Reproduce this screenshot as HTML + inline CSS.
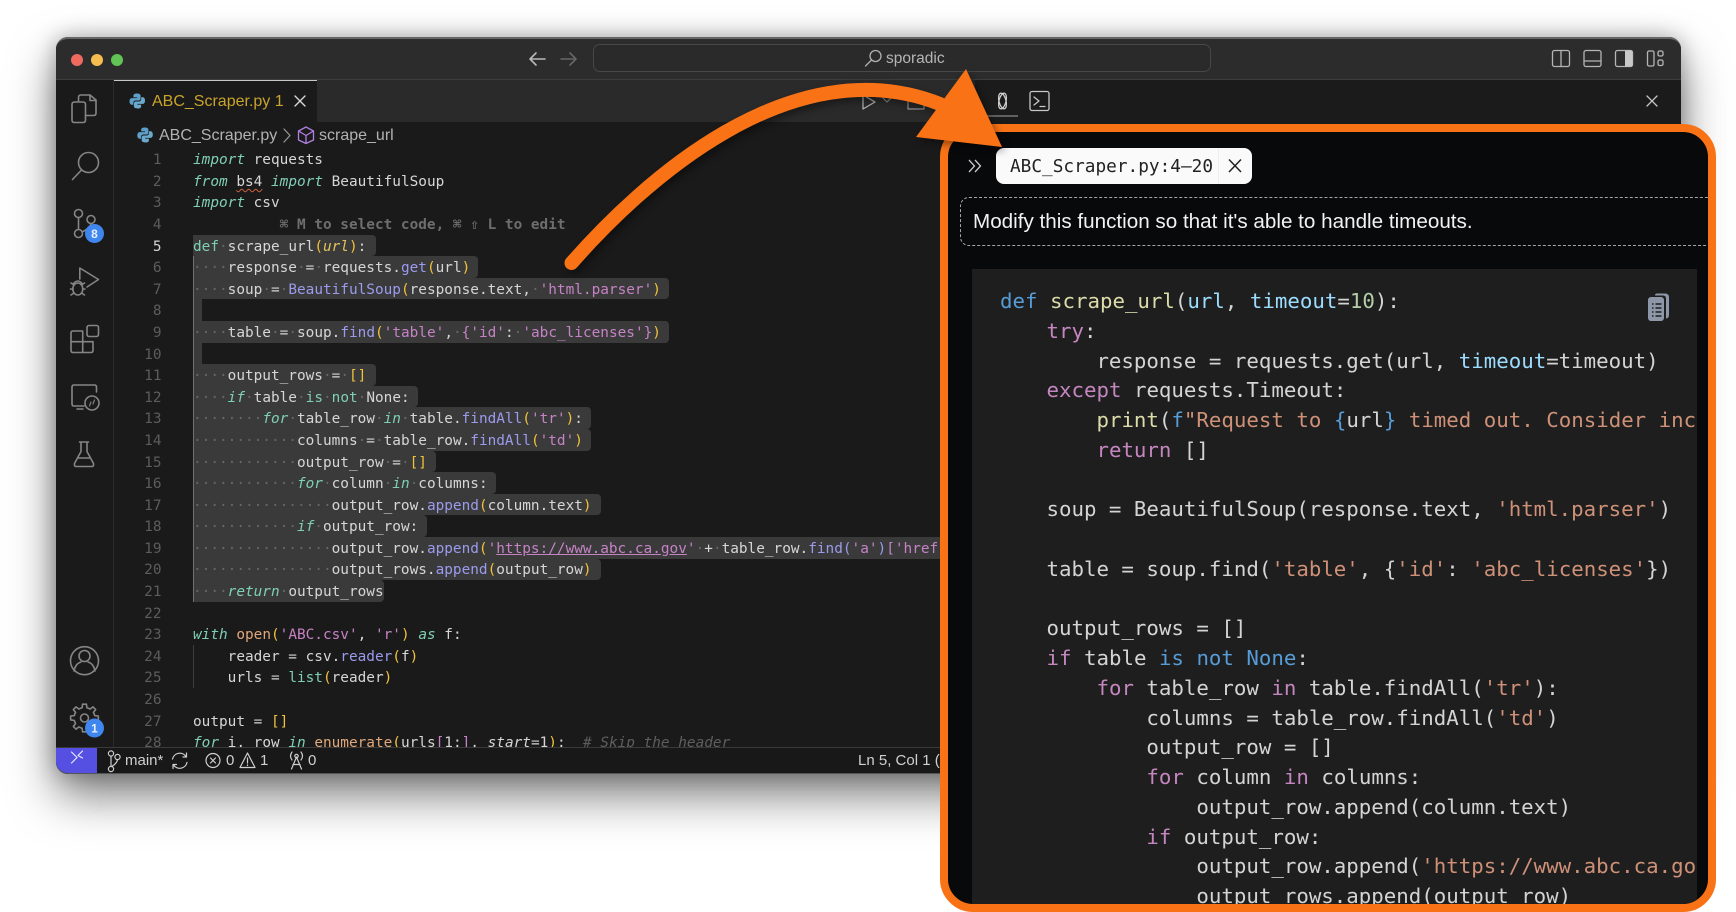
<!DOCTYPE html>
<html><head><meta charset="utf-8"><title>ABC_Scraper</title>
<style>
html,body{margin:0;padding:0;background:#fff;width:1736px;height:912px;overflow:hidden}
*{box-sizing:border-box}
.abs{position:absolute}
.sans{font-family:"Liberation Sans",sans-serif}
#win{position:absolute;left:56px;top:37px;width:1625px;height:737px;border-radius:12px;background:#1a1a1a;box-shadow:0 22px 46px rgba(0,0,0,.5),0 0 22px rgba(0,0,0,.28)}
#title{position:absolute;left:56px;top:37px;width:1625px;height:43px;background:#2c2c2c;border-top:2px solid #666;border-bottom:1px solid #3c3c3c;border-radius:12px 12px 0 0}
#tabrow{position:absolute;left:113px;top:80px;width:862px;height:42px;background:#2a2a2a}
#tab{position:absolute;left:113px;top:80px;width:204px;height:42px;background:#1a1a1a;border-top:1.5px solid #c8c8c8}
#actline{position:absolute;left:113px;top:80px;width:1px;height:667px;background:#2b2b2b}
#status{position:absolute;left:56px;top:747px;width:1625px;height:27px;background:#181818;border-top:1px solid #3a3a3a;border-bottom:1px solid #555;border-radius:0 0 12px 12px;overflow:hidden}
#remote{position:absolute;left:0;top:0;width:41px;height:27px;background:#5650e2}
.sel{position:absolute;left:193px;height:21.6px;background:#3a3a3a;border-radius:0 4px 4px 0}
#nums{position:absolute;left:121px;top:150.2px;width:40.5px;height:596.8px;overflow:hidden;font:14.4px/21.6px "DejaVu Sans Mono",monospace;color:#5c5c5c;text-align:right}
#nums b{font-weight:normal;color:#d4d4d4}
#code{position:absolute;left:193px;top:150.2px;width:747px;height:596.8px;overflow:hidden;font:14.4px/21.6px "DejaVu Sans Mono",monospace;color:#d6d6d6;filter:blur(.25px)}
#code div{height:21.6px;white-space:pre}
.k{color:#7fcfb6;font-style:italic}.K{color:#7fcfb6}.f{color:#9b9bee}.s{color:#c583c6}.p{color:#f0c23c}.d{color:#666}.v{color:#e2c35c;font-style:italic}.o{color:#e0a87a}.c{color:#5e5e5e;font-style:italic}.h{color:#6e6e6e;font-weight:bold}.w{color:#8a8a8a;font-style:italic}
.u{text-decoration:underline;text-decoration-color:#c583c6}
.wv{text-decoration:underline wavy #c8623c 1px;text-underline-offset:2px}
#panel{position:absolute;left:940px;top:124px;width:776px;height:788px;border:8px solid #f97316;border-radius:33px;background:#08090b;overflow:hidden}
#pill{position:absolute;left:47.5px;top:16px;width:256.5px;height:36px;background:#fafafa;border-radius:8px;color:#222;font:17.75px/39.5px "DejaVu Sans Mono",monospace}
#pill span{position:absolute;left:14.5px;top:0;white-space:pre}
#pill i{position:absolute;left:222.5px;top:0;width:1px;height:36px;background:#eee}
#prompt{position:absolute;left:12px;top:64.5px;width:770px;height:49px;border:1px dashed #a5a5a5;border-radius:9px}
#ptext{position:absolute;left:25px;top:77.5px;font:20.65px/24px "Liberation Sans",sans-serif;color:#f2f2f2;white-space:pre}
#box{position:absolute;left:24px;top:137px;width:725px;height:640px;background:#1e1e1e;overflow:hidden}
#rc{position:absolute;left:24.5px;top:18px;width:900px;font:20.76px/29.75px "DejaVu Sans Mono",monospace;color:#d4d4d4;filter:blur(.25px)}
#rc div{height:29.75px;white-space:pre}
.b{color:#569cd6}.y{color:#dcdcaa}.l{color:#9cdcfe}.n{color:#b5cea8}.m{color:#c586c0}.r{color:#ce9178}
svg{position:absolute;left:0;top:0;overflow:visible}
</style></head><body>
<div id="win"></div>
<div id="title"></div>
<div id="tabrow"></div>
<div id="tab"></div>
<div id="actline"></div>

<div class="abs" style="left:593px;top:44px;width:618px;height:28px;border:1px solid #474747;border-radius:7px;background:#2a2a2a"></div>
<div class="abs sans" style="left:886px;top:50px;font-size:15.5px;line-height:18px;color:#b5b5b5">sporadic</div>

<div class="abs sans" style="left:152px;top:92px;font-size:16px;line-height:19px;color:#c9a42b;white-space:pre">ABC_Scraper.py 1</div>
<div class="abs sans" style="left:159px;top:126px;font-size:16px;line-height:19px;color:#b2b2b2">ABC_Scraper.py</div>
<div class="abs sans" style="left:319px;top:126px;font-size:16px;line-height:19px;color:#b2b2b2">scrape_url</div>

<div class="sel" style="top:234.6px;width:183px"></div>
<div class="sel" style="top:256.2px;width:285px"></div>
<div class="sel" style="top:277.8px;width:476px"></div>
<div class="sel" style="top:299.4px;width:9px;border-radius:0"></div>
<div class="sel" style="top:321px;width:476px"></div>
<div class="sel" style="top:342.6px;width:9px;border-radius:0"></div>
<div class="sel" style="top:364.2px;width:183px"></div>
<div class="sel" style="top:385.8px;width:225px"></div>
<div class="sel" style="top:407.4px;width:398px"></div>
<div class="sel" style="top:429px;width:398px"></div>
<div class="sel" style="top:450.6px;width:243px"></div>
<div class="sel" style="top:472.2px;width:303px"></div>
<div class="sel" style="top:493.8px;width:408px"></div>
<div class="sel" style="top:515.4px;width:234px"></div>
<div class="sel" style="top:537px;width:750px"></div>
<div class="sel" style="top:558.6px;width:408px"></div>
<div class="sel" style="top:580.2px;width:191px"></div>
<div class="abs" style="left:193px;top:256px;width:1px;height:346px;background:#707070"></div>
<div class="abs" style="left:193px;top:645px;width:1px;height:43px;background:#3d3d3d"></div>

<div id="nums"><div>1</div><div>2</div><div>3</div><div>4</div><div><b>5</b></div><div>6</div><div>7</div><div>8</div><div>9</div><div>10</div><div>11</div><div>12</div><div>13</div><div>14</div><div>15</div><div>16</div><div>17</div><div>18</div><div>19</div><div>20</div><div>21</div><div>22</div><div>23</div><div>24</div><div>25</div><div>26</div><div>27</div><div>28</div></div>

<div id="code">
<div><span class="k">import</span> requests</div>
<div><span class="k">from</span> <span class="wv">bs4</span> <span class="k">import</span> BeautifulSoup</div>
<div><span class="k">import</span> csv</div>
<div class="h">          ⌘ M to select code, ⌘ ⇧ L to edit</div>
<div><span class="K">def</span><span class="d">·</span>scrape_url<span class="p">(</span><span class="v">url</span><span class="p">)</span>:</div>
<div><span class="d">····</span>response<span class="d">·</span>=<span class="d">·</span>requests.<span class="f">get</span><span class="p">(</span>url<span class="p">)</span></div>
<div><span class="d">····</span>soup<span class="d">·</span>=<span class="d">·</span><span class="f">BeautifulSoup</span><span class="p">(</span>response.text,<span class="d">·</span><span class="s">'html.parser'</span><span class="p">)</span></div>
<div></div>
<div><span class="d">····</span>table<span class="d">·</span>=<span class="d">·</span>soup.<span class="f">find</span><span class="p">(</span><span class="s">'table'</span>,<span class="d">·</span><span class="s">{'id'</span>:<span class="d">·</span><span class="s">'abc_licenses'}</span><span class="p">)</span></div>
<div></div>
<div><span class="d">····</span>output_rows<span class="d">·</span>=<span class="d">·</span><span class="p">[]</span></div>
<div><span class="d">····</span><span class="k">if</span><span class="d">·</span>table<span class="d">·</span><span class="K">is</span><span class="d">·</span><span class="K">not</span><span class="d">·</span>None:</div>
<div><span class="d">········</span><span class="k">for</span><span class="d">·</span>table_row<span class="d">·</span><span class="k">in</span><span class="d">·</span>table.<span class="f">findAll</span><span class="p">(</span><span class="s">'tr'</span><span class="p">)</span>:</div>
<div><span class="d">············</span>columns<span class="d">·</span>=<span class="d">·</span>table_row.<span class="f">findAll</span><span class="p">(</span><span class="s">'td'</span><span class="p">)</span></div>
<div><span class="d">············</span>output_row<span class="d">·</span>=<span class="d">·</span><span class="p">[]</span></div>
<div><span class="d">············</span><span class="k">for</span><span class="d">·</span>column<span class="d">·</span><span class="k">in</span><span class="d">·</span>columns:</div>
<div><span class="d">················</span>output_row.<span class="f">append</span><span class="p">(</span>column.text<span class="p">)</span></div>
<div><span class="d">············</span><span class="k">if</span><span class="d">·</span>output_row:</div>
<div><span class="d">················</span>output_row.<span class="f">append</span><span class="p">(</span><span class="s">'</span><span class="s u">https://www.abc.ca.gov</span><span class="s">'</span><span class="d">·</span>+<span class="d">·</span>table_row.<span class="f">find</span><span class="f">(</span><span class="s">'a'</span><span class="f">)</span><span class="s">['href</span></div>
<div><span class="d">················</span>output_rows.<span class="f">append</span><span class="p">(</span>output_row<span class="p">)</span></div>
<div><span class="d">····</span><span class="k">return</span><span class="d">·</span>output_rows</div>
<div></div>
<div><span class="k">with</span> <span class="o">open</span><span class="p">(</span><span class="s">'ABC.csv'</span>, <span class="s">'r'</span><span class="p">)</span> <span class="k">as</span> f:</div>
<div>    reader = csv.<span class="f">reader</span><span class="p">(</span>f<span class="p">)</span></div>
<div>    urls = <span class="K">list</span><span class="p">(</span>reader<span class="p">)</span></div>
<div></div>
<div>output = <span class="p">[]</span></div>
<div><span class="k">for</span> i, row <span class="k">in</span> <span class="o">enumerate</span><span class="p">(</span>urls<span class="s">[</span>1:<span class="s">]</span>, <span class="w" style="color:#d6d6d6">start</span>=1<span class="p">)</span>:  <span class="c"># Skip the header</span></div>
</div>

<div id="status"><div id="remote"></div></div>
<div class="abs sans" style="left:125px;top:751px;font-size:15px;line-height:19px;color:#d0d0d0">main*</div>
<div class="abs sans" style="left:226px;top:751px;font-size:15px;line-height:19px;color:#d0d0d0">0</div>
<div class="abs sans" style="left:260px;top:751px;font-size:15px;line-height:19px;color:#d0d0d0">1</div>
<div class="abs sans" style="left:308px;top:751px;font-size:15px;line-height:19px;color:#d0d0d0">0</div>
<div class="abs sans" style="left:858px;top:751px;font-size:15px;line-height:19px;color:#d0d0d0;white-space:pre">Ln 5, Col 1 (</div>

<svg width="1736" height="912" viewBox="0 0 1736 912" fill="none" stroke="#858585" stroke-width="1.6" stroke-linecap="round" stroke-linejoin="round">
<circle cx="77" cy="60" r="6" fill="#ee6a5f" stroke="none"/>
<circle cx="97" cy="60" r="6" fill="#f5bd4f" stroke="none"/>
<circle cx="117" cy="60" r="6" fill="#61c454" stroke="none"/>
<path d="M545 59H530M536 53L530 59L536 65" stroke="#b8b8b8"/>
<path d="M561 59H576M570 53L576 59L570 65" stroke="#666"/>
<circle cx="875.5" cy="56" r="5.5" stroke="#b0b0b0" stroke-width="1.3"/><path d="M871.5 60L865.5 66" stroke="#b0b0b0" stroke-width="1.3"/>
<g stroke="#b5b5b5" stroke-width="1.3">
<rect x="1552.5" y="50.5" width="17" height="16" rx="2"/><path d="M1561 50.5V66.5"/>
<rect x="1584" y="50.5" width="17" height="16" rx="2"/><path d="M1584 61H1601"/>
<rect x="1615.5" y="50.5" width="17" height="16" rx="2"/><rect x="1625" y="50.5" width="7.5" height="16" fill="#c8c8c8" stroke="none"/>
<rect x="1647.5" y="51" width="6.5" height="15" rx="1.5"/><rect x="1658" y="51" width="5" height="5" rx="1.5"/><rect x="1658" y="60" width="5" height="5.5" rx="1.5"/>
</g>
<path d="M295 96L305 106M305 96L295 106" stroke="#d8d8d8" stroke-width="1.4"/>
<g stroke="none">
<path d="M137 93.500c-3 0-3.600 1.200-3.600 2.300v1.600h3.800v.7h-5.300c-1.500 0-2.400 1.300-2.400 3.300s.9 3.300 2.300 3.300h1.500v-1.900c0-1.300 1-2.300 2.300-2.300h3.100c1 0 1.900-.9 1.900-1.900v-3c0-1.200-1.400-2.100-3.600-2.100z" fill="#5e9fc9"/>
<path d="M137.500 108.500c3 0 3.600-1.200 3.600-2.300v-1.600h-3.800v-.7h5.300c1.500 0 2.400-1.300 2.400-3.300s-.9-3.300-2.300-3.300h-1.500v1.900c0 1.300-1 2.300-2.300 2.300h-3.100c-1 0-1.900.9-1.900 1.900v3c0 1.200 1.400 2.100 3.600 2.100z" fill="#6aa9cc"/>
</g>
<g stroke="none" transform="translate(7.800 34)">
<path d="M137 93.500c-3 0-3.600 1.200-3.600 2.300v1.600h3.800v.7h-5.300c-1.500 0-2.400 1.300-2.400 3.300s.9 3.300 2.300 3.300h1.500v-1.900c0-1.300 1-2.300 2.300-2.300h3.100c1 0 1.900-.9 1.900-1.900v-3c0-1.200-1.400-2.100-3.600-2.100z" fill="#5e9fc9"/>
<path d="M137.500 108.500c3 0 3.600-1.200 3.600-2.300v-1.600h-3.800v-.7h5.300c1.500 0 2.400-1.300 2.400-3.300s-.9-3.300-2.300-3.300h-1.500v1.900c0 1.300-1 2.300-2.300 2.300h-3.100c-1 0-1.900.9-1.900 1.900v3c0 1.200 1.400 2.100 3.600 2.100z" fill="#6aa9cc"/>
</g>
<path d="M284 129L290 135.500L284 142" stroke="#9a9a9a" stroke-width="1.2"/>
<path d="M306 127L313.500 131V140L306 143.500L298.500 140V131ZM298.500 131L306 135.500L313.500 131M306 135.500V143.500" stroke="#b07fe0" stroke-width="1.3"/>
<path d="M863 95L875 102L863 109Z" stroke="#b0b0b0" stroke-width="1.3"/>
<path d="M883 98L887 102L891 98" stroke="#888" stroke-width="1.2"/>
<rect x="908" y="95" width="16" height="14" stroke="#999" stroke-width="1.2"/>
<rect x="975" y="80" width="706" height="42" fill="#1b1b1b" stroke="none"/>
<ellipse cx="1002.500" cy="101" rx="3.500" ry="8" stroke="#cfcfcf" stroke-width="1.3" transform="rotate(14 1002.500 101)"/>
<ellipse cx="1002.500" cy="101" rx="3.500" ry="8" stroke="#cfcfcf" stroke-width="1.3" transform="rotate(-14 1002.500 101)"/>
<path d="M985 116H1018" stroke="#777" stroke-width="1.600" stroke-linecap="butt"/>
<rect x="1030" y="91.500" width="19" height="19" rx="2" stroke="#c8c8c8" stroke-width="1.300"/>
<path d="M1034 97L1039 101L1034 105M1040 106.500H1045" stroke="#c8c8c8" stroke-width="1.300"/>
<path d="M1647 96L1657 106M1657 96L1647 106" stroke="#c8c8c8" stroke-width="1.300"/>
<path d="M78.500 101V97.500Q78.500 95 81 95H90L96 100V113Q96 115.500 93.500 115.500H85.500"/>
<path d="M90 95V100.500H96"/>
<path d="M74.500 102H83Q85.500 102 85.500 104.500V120Q85.500 122.500 83 122.500H74.500Q72 122.500 72 120V104.500Q72 102 74.500 102Z"/>
<circle cx="88.500" cy="162.500" r="10"/><path d="M81.500 170L72.500 179.500"/>
<circle cx="78.500" cy="213.500" r="4"/><circle cx="78.500" cy="233.500" r="4"/><circle cx="91" cy="219.500" r="4"/>
<path d="M78.500 217.500V229.500M91 223.500Q90.500 228 82 232"/>
<path d="M79.800 279V268L98.500 279.500L87 287"/>
<ellipse cx="77.800" cy="289" rx="5" ry="6"/><path d="M71 283L74 285M84.500 283L81.500 285M70.500 289H73M85 289H82.500M71 295L74 293M84.500 295L81.500 293M73 284Q78 278 82.500 284"/>
<rect x="87" y="325.500" width="11.500" height="11" rx="2"/>
<path d="M73 331H82.700V341.700H93V350.500Q93 352.500 91 352.500H73Q71 352.500 71 350.500V333Q71 331 73 331ZM71 341.700H82.700V352.500"/>
<path d="M96.500 392V387Q96.500 385 94.500 385H74Q72 385 72 387V404Q72 406 74 406H84M77 409H83"/>
<circle cx="92" cy="403" r="7"/><path d="M89.500 406L91 402M93 404L94.500 400" stroke-width="1.100"/>
<path d="M79.500 442H88.500M81 442V451.500L74.500 463.500Q73.800 466.500 76.500 466.500H91.500Q94.200 466.500 93.500 463.500L87 451.500V442M77.500 458H90.500"/>
<circle cx="84.500" cy="660.700" r="14"/><circle cx="84.500" cy="656" r="5.500"/><path d="M74 671Q75.500 663.500 81 662M95 671Q93.500 663.500 88 662"/>
<g transform="translate(84.500 718)">
<circle r="4"/>
<path d="M-4.020 -9.700L-2.360 -10.230L-1.950 -13.860H1.950L2.360 -10.230L4.020 -9.700"/>
<path transform="rotate(45)" d="M-4.020 -9.700L-2.360 -10.230L-1.950 -13.860H1.950L2.360 -10.230L4.020 -9.700"/>
<path transform="rotate(90)" d="M-4.020 -9.700L-2.360 -10.230L-1.950 -13.860H1.950L2.360 -10.230L4.020 -9.700"/>
<path transform="rotate(135)" d="M-4.020 -9.700L-2.360 -10.230L-1.950 -13.860H1.950L2.360 -10.230L4.020 -9.700"/>
<path transform="rotate(180)" d="M-4.020 -9.700L-2.360 -10.230L-1.950 -13.860H1.950L2.360 -10.230L4.020 -9.700"/>
<path transform="rotate(225)" d="M-4.020 -9.700L-2.360 -10.230L-1.950 -13.860H1.950L2.360 -10.230L4.020 -9.700"/>
<path transform="rotate(270)" d="M-4.020 -9.700L-2.360 -10.230L-1.950 -13.860H1.950L2.360 -10.230L4.020 -9.700"/>
<path transform="rotate(315)" d="M-4.020 -9.700L-2.360 -10.230L-1.950 -13.860H1.950L2.360 -10.230L4.020 -9.700"/>
</g>
<circle cx="94.500" cy="233.500" r="9.500" fill="#3f86ee" stroke="none"/>
<circle cx="94.500" cy="728" r="9.500" fill="#3f86ee" stroke="none"/>
<text x="94.500" y="238" text-anchor="middle" font-family="Liberation Sans,sans-serif" font-size="12" font-weight="bold" fill="#e8f0ff" stroke="none">8</text>
<text x="94.500" y="732.500" text-anchor="middle" font-family="Liberation Sans,sans-serif" font-size="12" font-weight="bold" fill="#e8f0ff" stroke="none">1</text>
<path d="M72 764L77.500 758.500L72 753M83 752L78.500 756.500L83 759" stroke="#e8e8ff" stroke-width="1.200" transform="translate(-.500 -1)"/>
<g stroke="#cfcfcf" stroke-width="1.200">
<circle cx="111" cy="753.500" r="2.600"/><circle cx="111" cy="769" r="2.600"/><circle cx="117.500" cy="757" r="2.600"/><path d="M111 756V766.500M117.500 759.600Q117 763 112.500 766"/>
<path d="M172.500 759A7.500 7.500 0 0 1 186 756.500M187 762.500A7.500 7.500 0 0 1 173.500 765M186.500 753V757H183M173 768.500V764.500H176.500"/>
<circle cx="213" cy="760.500" r="7"/><path d="M210.500 758L215.500 763M215.500 758L210.500 763"/>
<path d="M247.500 753L255 767.500H240ZM247.500 758V763M247.500 765V765.500"/>
<path d="M296.500 757L291.500 769M296.500 757L301.500 769M293 764.500H300"/><circle cx="296.500" cy="756" r="1.700"/>
<path d="M292 752Q289 756 292 760M301 752Q304 756 301 760"/>
</g>
</svg>

<div id="panel">
  <svg width="30" height="30" style="left:20px;top:23px" viewBox="0 0 30 30" fill="none" stroke="#c8c8c8" stroke-width="1.300"><path d="M1 5L6.500 11L1 17M7 5L12.500 11L7 17"/></svg>
  <div id="pill"><span>ABC_Scraper.py:4–20</span><i></i><svg width="20" height="20" style="left:231px;top:9px" viewBox="0 0 20 20" fill="none" stroke="#222" stroke-width="1.500"><path d="M2 2.500L14 15M14 2.500L2 15"/></svg></div>
  <div id="prompt"></div>
  <div id="ptext">Modify this function so that it's able to handle timeouts.</div>
  <div id="box">
    <div id="rc">
<div style="padding-left:3.5px"><span class="b">def</span> <span class="y">scrape_url</span>(<span class="l">url</span>, <span class="l">timeout</span>=<span class="n">10</span>):</div>
<div>    <span class="m">try</span>:</div>
<div>        response = requests.get(url, <span class="l">timeout</span>=timeout)</div>
<div>    <span class="m">except</span> requests.Timeout:</div>
<div>        <span class="y">print</span>(<span class="b">f</span><span class="r">"Request to </span><span class="b">{</span>url<span class="b">}</span><span class="r"> timed out. Consider increasing the timeout."</span>)</div>
<div>        <span class="m">return</span> []</div>
<div></div>
<div>    soup = BeautifulSoup(response.text, <span class="r">'html.parser'</span>)</div>
<div></div>
<div>    table = soup.find(<span class="r">'table'</span>, {<span class="r">'id'</span>: <span class="r">'abc_licenses'</span>})</div>
<div></div>
<div>    output_rows = []</div>
<div>    <span class="m">if</span> table <span class="b">is</span> <span class="b">not</span> <span class="b">None</span>:</div>
<div>        <span class="m">for</span> table_row <span class="m">in</span> table.findAll(<span class="r">'tr'</span>):</div>
<div>            columns = table_row.findAll(<span class="r">'td'</span>)</div>
<div>            output_row = []</div>
<div>            <span class="m">for</span> column <span class="m">in</span> columns:</div>
<div>                output_row.append(column.text)</div>
<div>            <span class="m">if</span> output_row:</div>
<div>                output_row.append(<span class="r">'https://www.abc.ca.gov'</span> + table_row.find(<span class="r">'a'</span>)[<span class="r">'href'</span>])</div>
<div>                output_rows.append(output_row)</div>
    </div>
    <svg width="40" height="40" style="left:675px;top:22px" viewBox="0 0 40 40">
      <path d="M10 2.500h8q4 0 4 4v17q0 4-3 4v-20q0-3-3-3h-8q0-2 2-2z" fill="#8e97a8"/>
      <rect x="1" y="6" width="16" height="24" rx="3" fill="#8e97a8"/>
      <path d="M5 13h1.500M5 17h1.500M5 21h1.500M5 25h1.500M8.500 13h6M8.500 17h6M8.500 21h6M8.500 25h6" stroke="#1e1e1e" stroke-width="1.600"/>
    </svg>
  </div>
</div>

<svg width="1736" height="912" viewBox="0 0 1736 912" fill="none" style="filter:drop-shadow(3px 4px 4px rgba(0,0,0,.4))">
  <path d="M571.500 263C640 185 790 45 940 104" stroke="#f97316" stroke-width="14" stroke-linecap="round"/>
  <path d="M966 69L916 137L1002 147Z" fill="#f97316"/>
</svg>
</body></html>
